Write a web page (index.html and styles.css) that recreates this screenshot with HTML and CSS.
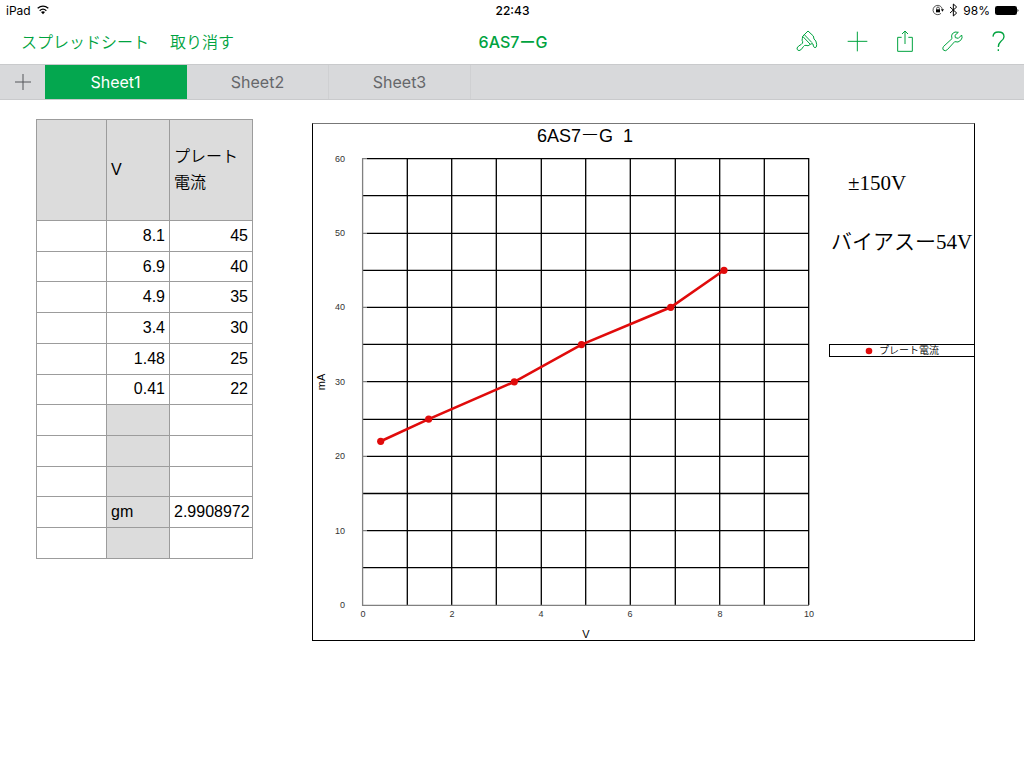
FILE: index.html
```html
<!DOCTYPE html>
<html lang="ja">
<head>
  <meta charset="UTF-8">
  <meta name="viewport" content="width=device-width, initial-scale=1.0">
  <title>6AS7ーG</title>
  <link rel="stylesheet" href="styles.css">
</head>
<body>
  <div class="status">
    <div class="status-left">
      <span>iPad</span>
      <svg width="12" height="10" viewBox="0 0 36 30" fill="none" stroke="#000" stroke-width="4">
        <path d="M2 10 Q18 -3 34 10"/>
        <path d="M8 17 Q18 8 28 17"/>
        <path d="M12 21 Q18 16 24 21 L18 28 Z" fill="#000" stroke="none"/>
      </svg>
    </div>
    <time class="clock">22:43</time>
    <div class="status-right">
      <svg width="12" height="12" viewBox="0 0 36 36" fill="none" stroke="#000" stroke-width="2">
        <path d="M27 28 A14 14 0 1 1 31 16"/>
        <path d="M27 16 H36 L31 23 Z" fill="#000" stroke="none"/>
        <rect x="12" y="16" width="12" height="9" fill="#000" stroke="none"/>
        <path d="M14 17 V13 A4 4 0 0 1 22 13 V17"/>
      </svg>
      <svg width="9" height="14" viewBox="0 0 27 42" fill="none" stroke="#000" stroke-width="3">
        <path d="M3 12 L23 30 L13 39 V3 L23 12 L3 30"/>
      </svg>
      <span>98%</span>
      <svg width="24" height="9" viewBox="0 0 24 9">
        <rect x="0.500" y="0.500" width="21" height="8" rx="1" fill="none" stroke="#000"/>
        <rect x="1" y="1" width="20" height="7"/>
        <path d="M22.500 3 Q24.500 4.500 22.500 6 Z"/>
      </svg>
    </div>
  </div>

  <header class="toolbar">
    <div class="actions">
      <button>スプレッドシート</button>
      <button>取り消す</button>
    </div>
    <h1>6AS7ーG</h1>
    <div class="tools">
      <button aria-label="書式">
        <svg width="22" height="22" viewBox="0 0 66 66">
          <path d="M20 19 L36 3 L52 18 L54 27 Q61 31 62 43 Q63 53 57 53 Q51 52 51 42 Q49 39 43 43 Q36 50 30 46 Q25 45 22 50 Q16 61 9 62 Q2 60 3 54 Q6 48 16 43 Q21 40 20 35 Q17 31 19 26 Z"/>
          <path d="M20 19 L43 43 M25 14 L48 38"/>
        </svg>
      </button>
      <button aria-label="追加">
        <svg width="21" height="21" viewBox="0 0 63 63">
          <path d="M2 31 H61 M31 2 V61"/>
        </svg>
      </button>
      <button aria-label="共有">
        <svg width="16" height="22" viewBox="0 0 48 66">
          <path d="M14 22 H2 V64 H46 V22 H34 M24 42 V3 M15 12 L24 3 L33 12"/>
        </svg>
      </button>
      <button aria-label="ツール">
        <svg width="21" height="21" viewBox="0 0 63 63">
          <path d="M49 4 Q38 0 31 8 Q27 14 30 23 L5 46 Q0 51 4 57 Q10 62 16 56 L38 32 Q49 36 56 28 Q63 21 59 12 L49 22 L40 20 L39 13 Z"/>
        </svg>
      </button>
      <button aria-label="ヘルプ">
        <svg class="help" width="13" height="21" viewBox="0 0 39 63">
          <path d="M3 17 Q4 3 19 3 Q36 3 36 17 Q36 24 27 31 Q19 38 19 48 M19 55 V60"/>
        </svg>
      </button>
    </div>
  </header>

  <nav class="tabs">
    <button class="add" aria-label="シートを追加">
      <svg width="16" height="16" viewBox="0 0 16 16"><path d="M0 8 H16 M8 0 V16"/></svg>
    </button>
    <button class="tab active">Sheet1</button>
    <button class="tab">Sheet2</button>
    <button class="tab">Sheet3</button>
  </nav>

  <main>
    <table>
      <colgroup><col class="c1"><col class="c2"><col class="c3"></colgroup>
      <thead>
        <tr><th></th><th>V</th><th>プレート電流</th></tr>
      </thead>
      <tbody>
        <tr><td></td><td>8.1</td><td>45</td></tr>
        <tr><td></td><td>6.9</td><td>40</td></tr>
        <tr><td></td><td>4.9</td><td>35</td></tr>
        <tr><td></td><td>3.4</td><td>30</td></tr>
        <tr><td></td><td>1.48</td><td>25</td></tr>
        <tr><td></td><td>0.41</td><td>22</td></tr>
        <tr><td></td><td class="shade"></td><td></td></tr>
        <tr><td></td><td class="shade"></td><td></td></tr>
        <tr><td></td><td class="shade"></td><td></td></tr>
        <tr><td></td><td class="shade">gm</td><td>2.9908972</td></tr>
        <tr><td></td><td class="shade"></td><td></td></tr>
      </tbody>
    </table>

    <figure class="chart">
      <svg class="plot" viewBox="0 0 516 516">
        <text class="title" x="272" y="18">6AS7ーG&#160; 1</text>
        <!-- grid -->
        <path class="grid" d="M94.300 34V481 M138.700 34V481 M183.300 34V481 M228.300 34V481 M272.700 34V481 M317.300 34V481 M362.300 34V481 M406.700 34V481 M451.300 34V481 M495.700 34V481"/>
        <path class="grid" d="M54 34.600H496 M50 71.700H496 M54 109.300H496 M50 146.300H496 M54 183.300H496 M50 220.400H496 M54 257.600H496 M50 295.300H496 M54 332.400H496 M50 369.500H496 M54 406.600H496 M50 443.600H496"/>
        <!-- axes and ticks -->
        <path class="axis" d="M49.600 34V481.300H496 M50 34.600H54 M50 109.300H54 M50 183.300H54 M50 257.600H54 M50 332.400H54 M50 406.600H54"/>
        <g class="y-labels">
          <text x="32" y="38">60</text>
          <text x="32" y="112">50</text>
          <text x="32" y="186">40</text>
          <text x="32" y="261">30</text>
          <text x="32" y="335">20</text>
          <text x="32" y="410">10</text>
          <text x="32" y="484">0</text>
        </g>
        <g class="x-labels">
          <text x="50" y="493">0</text>
          <text x="139" y="493">2</text>
          <text x="228" y="493">4</text>
          <text x="317" y="493">6</text>
          <text x="407" y="493">8</text>
          <text x="496" y="493">10</text>
        </g>
        <text class="axis-name" x="273" y="514">V</text>
        <text class="axis-name" transform="translate(12 258) rotate(-90)">mA</text>
        <!-- data -->
        <polyline class="line" points="67.700,317.300 115.700,295.100 201.300,257.800 268.500,220.600 357.700,183.300 411,146.300"/>
        <g class="points">
          <circle cx="67.700" cy="317.300" r="3.600"/>
          <circle cx="115.700" cy="295.100" r="3.600"/>
          <circle cx="201.300" cy="257.800" r="3.600"/>
          <circle cx="268.500" cy="220.600" r="3.600"/>
          <circle cx="357.700" cy="183.300" r="3.600"/>
          <circle cx="411" cy="146.300" r="3.600"/>
        </g>
      </svg>
      <div class="side">
        <p class="plate">±150V</p>
        <p class="bias">バイアスー54V</p>
        <figcaption class="legend">
          <svg width="8" height="8" viewBox="0 0 8 8"><circle cx="4" cy="4" r="3.300"/></svg>
          <span>プレート電流</span>
        </figcaption>
      </div>
    </figure>
  </main>
</body>
</html>
```
FILE: styles.css
```css
* {
  box-sizing: border-box;
}
body {
  margin: 0;
  background: #fff;
  color: #000;
  font-family: Inter, "Noto Sans CJK JP", sans-serif;
}
button {
  display: flex;
  align-items: center;
  justify-content: center;
  padding: 0;
  border: none;
  background: none;
  color: inherit;
  font: inherit;
  cursor: pointer;
}
.status {
  display: grid;
  grid-template-columns: 1fr auto 1fr;
  align-items: center;
  height: 20px;
  padding: 0 5px 0 6px;
  font-size: 12px;
}
.status-left,
.status-right {
  display: flex;
  align-items: center;
  gap: 6px;
}
.status-right {
  justify-content: flex-end;
  gap: 5px;
}
.clock {
  font-weight: 500;
}
.toolbar {
  display: grid;
  grid-template-columns: 1fr auto 1fr;
  align-items: center;
  height: 44px;
  padding: 0 19px 2px 21px;
  color: #00a33f;
}
.actions {
  display: flex;
  gap: 21px;
  font-size: 16px;
  font-weight: 350;
}
.toolbar h1 {
  margin: 0;
  font-size: 16px;
  font-weight: 500;
}
.tools {
  display: flex;
  align-items: center;
  justify-content: flex-end;
  gap: 29px;
}
.tools svg {
  fill: none;
  stroke: #00a33f;
  stroke-width: 3;
  stroke-linejoin: round;
}
.tools .help {
  stroke-width: 4;
}
.tabs {
  display: flex;
  height: 36px;
  background: #d8d9db;
  border-top: 1px solid #c9cacc;
  border-bottom: 1px solid #c9cacc;
  font-size: 16px;
  color: #66676a;
}
.add {
  width: 45px;
}
.add svg {
  stroke: #55565a;
}
.tab {
  width: 142px;
  border-right: 1px solid #cfd0d2;
}
.tab.active {
  background: #04a74f;
  border-color: #04a74f;
  color: #fff;
}
main {
  display: flex;
  align-items: flex-start;
  gap: 59px;
  padding: 19px 49px 20px 36px;
}
table {
  flex: none;
  width: 217px;
  height: 440px;
  table-layout: fixed;
  border-collapse: collapse;
  font-family: "Liberation Sans", "Noto Sans CJK JP", sans-serif;
  font-size: 16px;
  line-height: 26px;
}
.c1 {
  width: 70px;
}
.c2 {
  width: 63px;
}
th,
td {
  padding: 0 4px;
  border: 1px solid #9c9c9c;
}
th {
  height: 101px;
  background: #dcdcdc;
  font-weight: 350;
  text-align: left;
}
td {
  height: 30px;
  text-align: right;
}
.shade {
  background: #dcdcdc;
  text-align: left;
}
.chart {
  display: flex;
  flex: 1;
  margin: 4px 0 0;
  border: 1px solid #000;
  border-top-color: #777;
}
.plot {
  flex: 1;
  min-width: 0;
  font-family: "Liberation Sans", "Noto Sans CJK JP", sans-serif;
}
.title {
  font-size: 18px;
  font-weight: 300;
  text-anchor: middle;
}
.grid {
  fill: none;
  stroke: #000;
  stroke-width: 1.3;
}
.axis {
  fill: none;
  stroke: #808080;
  stroke-width: 1.3;
}
.y-labels {
  font-size: 9px;
  fill: #333;
  text-anchor: end;
}
.x-labels {
  font-size: 9px;
  fill: #333;
  text-anchor: middle;
}
.axis-name {
  font-size: 11px;
  text-anchor: middle;
}
.line {
  fill: none;
  stroke: #e00b0b;
  stroke-width: 2.6;
}
.points,
.legend svg {
  fill: #e00b0b;
}
.side {
  flex: none;
  width: 145px;
  padding-top: 44px;
  font-family: "Liberation Serif", "Noto Sans CJK JP", serif;
  font-size: 21px;
  font-weight: 350;
  line-height: 30px;
  white-space: nowrap;
}
.side p {
  margin: 0;
}
.plate {
  padding-left: 19px;
}
.side .bias {
  margin-top: 29px;
  padding-left: 2px;
}
.legend {
  display: flex;
  align-items: center;
  justify-content: center;
  gap: 6px;
  height: 13px;
  margin-top: 87px;
  border: 1px solid #000;
  border-right: none;
  font-size: 10px;
  line-height: 11px;
}
```
